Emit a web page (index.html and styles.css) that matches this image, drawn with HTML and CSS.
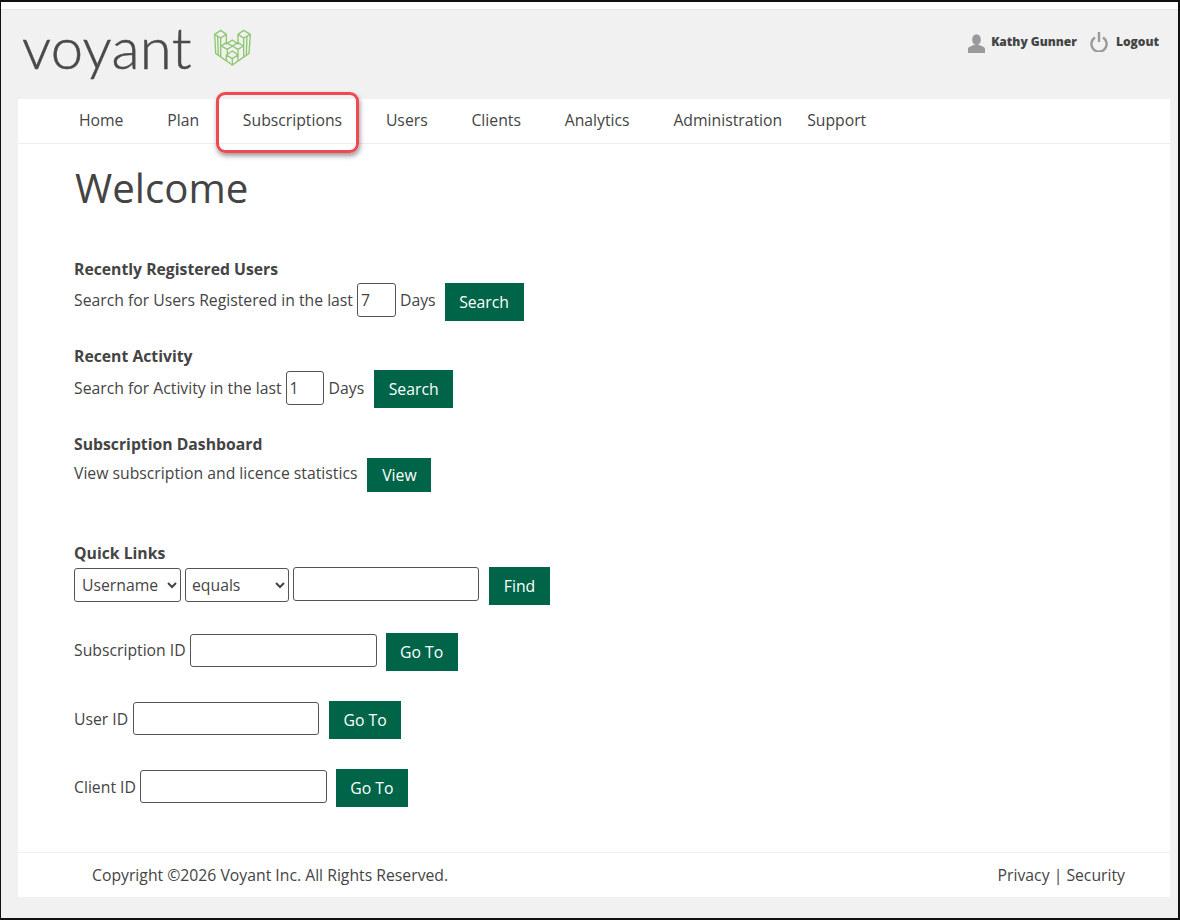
FILE: index.html
```html
<!DOCTYPE html>
<html lang="en">
<head>
  <meta charset="UTF-8"/>
  <title>Voyant</title>
  <link rel="stylesheet" href="styles.css">
</head>
<body>
  <div class="frame">
    <div class="header">
      <div class="brand">
        <span class="wordmark">voyant</span>
        <svg class="logo" viewBox="0 0 180 150" width="60" height="50" fill="none" stroke="#8ec76f" stroke-width="4" stroke-linejoin="round">
          <path d="M50 43 L68 31 L85 43 L85 72 L103 60 L120 72 L120 43 L137 31 L157 43 L153 100 L103 135 L53 100 Z"/>
          <path d="M50 43 L68 54 L85 43 M68 54 L68 110 M59 49 L61 104"/>
          <path d="M120 43 L137 54 L157 43 M137 54 L137 110 M147 49 L145 104"/>
          <path d="M70 78 L85 68 L103 78 L88 88 Z M88 88 L88 106"/>
          <path d="M103 78 L120 68 L136 78 L120 88 Z M120 88 L120 106"/>
          <path d="M85 105 L103 93 L120 105 L103 116 Z M103 116 L103 135 M85 105 L85 123 M120 105 L120 123"/>
        </svg>
      </div>
      <div class="account">
        <svg class="user-icon" viewBox="0 0 18 20" width="17" height="19" fill="#9a9a9a">
          <ellipse cx="9" cy="6" rx="4.6" ry="5.8"/>
          <path d="M0 20 V15.5 C0 13.5 3 13 6 11.5 H12 C15 13 18 13.5 18 15.5 V20 Z"/>
        </svg>
        <a class="account-link name-link">Kathy Gunner</a>
        <svg class="power-icon" viewBox="0 0 18 20" width="18" height="20" fill="none" stroke="#9a9a9a" stroke-width="2.4">
          <path d="M5 5.6 A7.6 7.6 0 1 0 13 5.6"/>
          <path d="M9 0 V10"/>
        </svg>
        <a class="account-link">Logout</a>
      </div>
    </div>

    <div class="page">
      <div class="nav">
        <a class="nav-item">Home</a>
        <a class="nav-item">Plan</a>
        <a class="nav-item">Subscriptions</a>
        <a class="nav-item">Users</a>
        <a class="nav-item">Clients</a>
        <a class="nav-item">Analytics</a>
        <a class="nav-item nav-admin">Administration</a>
        <a class="nav-item">Support</a>
      </div>
      <div class="callout"></div>

      <div class="content">
        <h1>Welcome</h1>

        <div class="section">
          <div class="section-title">Recently Registered Users</div>
          <div class="row">
            <span class="label">Search for Users Registered in the last</span>
            <input class="field days" type="text" value="7">
            <span class="label days-label">Days</span>
            <button class="btn btn-search">Search</button>
          </div>
        </div>

        <div class="section section-activity">
          <div class="section-title">Recent Activity</div>
          <div class="row">
            <span class="label">Search for Activity in the last</span>
            <input class="field days" type="text" value="1">
            <span class="label days-label">Days</span>
            <button class="btn btn-search">Search</button>
          </div>
        </div>

        <div class="section section-dash">
          <div class="section-title">Subscription Dashboard</div>
          <div class="row row-dash">
            <span class="label">View subscription and licence statistics</span>
            <button class="btn btn-view">View</button>
          </div>
        </div>

        <div class="quick">
          <div class="section-title">Quick Links</div>
          <div class="row row-find">
            <select class="field pick pick-user"><option>Username</option></select>
            <select class="field pick pick-op"><option>equals</option></select>
            <input class="field find-box" type="text">
            <button class="btn btn-find">Find</button>
          </div>
          <div class="row row-id">
            <span class="label">Subscription ID</span>
            <input class="field id-box" type="text">
            <button class="btn btn-goto">Go To</button>
          </div>
          <div class="row row-id row-user">
            <span class="label">User ID</span>
            <input class="field id-box" type="text">
            <button class="btn btn-goto">Go To</button>
          </div>
          <div class="row row-id">
            <span class="label">Client ID</span>
            <input class="field id-box" type="text">
            <button class="btn btn-goto">Go To</button>
          </div>
        </div>
      </div>

      <div class="footer">
        <span>Copyright ©2026 Voyant Inc. All Rights Reserved.</span>
        <span class="footer-links"><a>Privacy</a> | <a>Security</a></span>
      </div>
    </div>
  </div>
</body>
</html>
```

FILE: styles.css
```css
html, body { margin: 0; height: 100%; overflow: hidden; }
body { background: #fff; color: #444; font-family: "Open Sans", sans-serif; font-size: 15.75px; }

.frame {
  box-sizing: border-box; height: 920px; background: #f1f1f1;
  border-top: 2px solid #111; border-left: 1px solid #111;
  border-right: 2px solid #111; border-bottom: 2px solid #111;
}
.frame::before { content: ""; display: block; height: 7px; background: #fff; }

.header {
  display: flex; justify-content: space-between; height: 90px;
  background: #f1f1f1; border-top: 1px solid #e6e6e6; box-sizing: border-box;
}
.brand { display: flex; align-items: flex-start; padding-left: 21px; }
.wordmark {
  font-family: "Lato", sans-serif; font-weight: 300; font-size: 58px; line-height: 70px;
  color: #4a4a4a; margin-top: 2px; letter-spacing: 0.3px; -webkit-text-stroke: 0.5px #4a4a4a;
}
.logo { margin: 10px 0 0 6px; }

.account { display: flex; align-items: flex-start; padding: 22px 19px 0 0; }
.account-link { font-size: 12px; font-weight: 800; line-height: 18px; color: #444; margin-top: 1px; }
.user-icon { margin: 2px 6px 0 0; }
.name-link { margin-right: 13px; }
.power-icon { margin: 0 8px 0 0; }

.page {
  position: relative; background: #fff; margin: 0 8px 0 17px; height: 798px;
  display: flex; flex-direction: column;
}
.nav {
  display: flex; height: 45px; box-sizing: border-box; padding-left: 39px; border-bottom: 1px solid #eee;
  color: #444; line-height: 42px;
}
.nav-item { padding: 0 21.9px; }
.nav-admin { padding-right: 3px; }

.callout {
  position: absolute; left: 198px; top: -7px; width: 137px; height: 55px;
  border: 3px solid #f04a50; border-radius: 9px;
  box-shadow: 1px 3px 5px rgba(0, 0, 0, 0.4);
}

.content { flex: 1; padding-left: 56px; }
h1 { margin: 16px 0 0; font-size: 40.25px; font-weight: 400; line-height: 56px; color: #444; padding-left: 1px; }

.section { height: 87px; }
.content h1 + .section { margin-top: 41px; }
.section-activity { height: 88px; }
.section-activity .label { margin-top: 1px; }
.section-activity .days { margin-top: 1px; width: 38px; }
.section-activity .days-label { margin-left: 5px; }
.section-title { font-weight: 700; line-height: 24px; color: #444; }
.row { display: flex; align-items: flex-start; margin-top: 2px; }
.label { line-height: 34px; }
.field {
  box-sizing: border-box; height: 34px; border: 1px solid #555; border-radius: 3px;
  background: #fff; color: #444; font-family: inherit; font-size: 15.75px; padding: 0 3px; margin: 0;
}
.days { width: 39px; margin-left: 4px; }
.days-label { margin-left: 4px; }

.btn {
  box-sizing: border-box; height: 38px; border: 0; background: #006548; color: #fff;
  font-family: inherit; font-size: 15.75px; padding: 0; margin: 0; text-align: center;
}
.btn-search { width: 79px; margin-left: 9px; }
.section-activity .btn-search { margin-left: 10px; }
.btn-view { width: 64px; height: 34px; margin: 2px 0 0 10px; }
.section-dash { height: 109px; }
.row-dash { margin-top: 0; }

.row-find { margin-top: 2px; }
.pick { padding: 0 4px 0 3px; margin: 1px 4px 0 0; }
.pick-user { width: 107px; }
.pick-op { width: 104px; padding-left: 2px; }
.find-box { width: 186px; }
.btn-find { width: 61px; margin-left: 10px; }
.row-id { margin-top: 28px; }
.row-id + .row-id { margin-top: 30px; }
.row-id + .row-id .label { margin-top: 1px; }
.id-box { width: 187px; margin: 1px 0 0 4px; height: 33px; }
.btn-goto { width: 72px; margin-left: 9px; }
.row-user .id-box { width: 186px; margin-left: 5px; }
.row-user .btn-goto { margin-left: 10px; }

.footer {
  display: flex; justify-content: space-between; height: 45px; box-sizing: border-box;
  border-top: 1px solid #eee; padding: 0 45px 0 74px; line-height: 44px;
}
.footer-links a { color: #444; }
```
